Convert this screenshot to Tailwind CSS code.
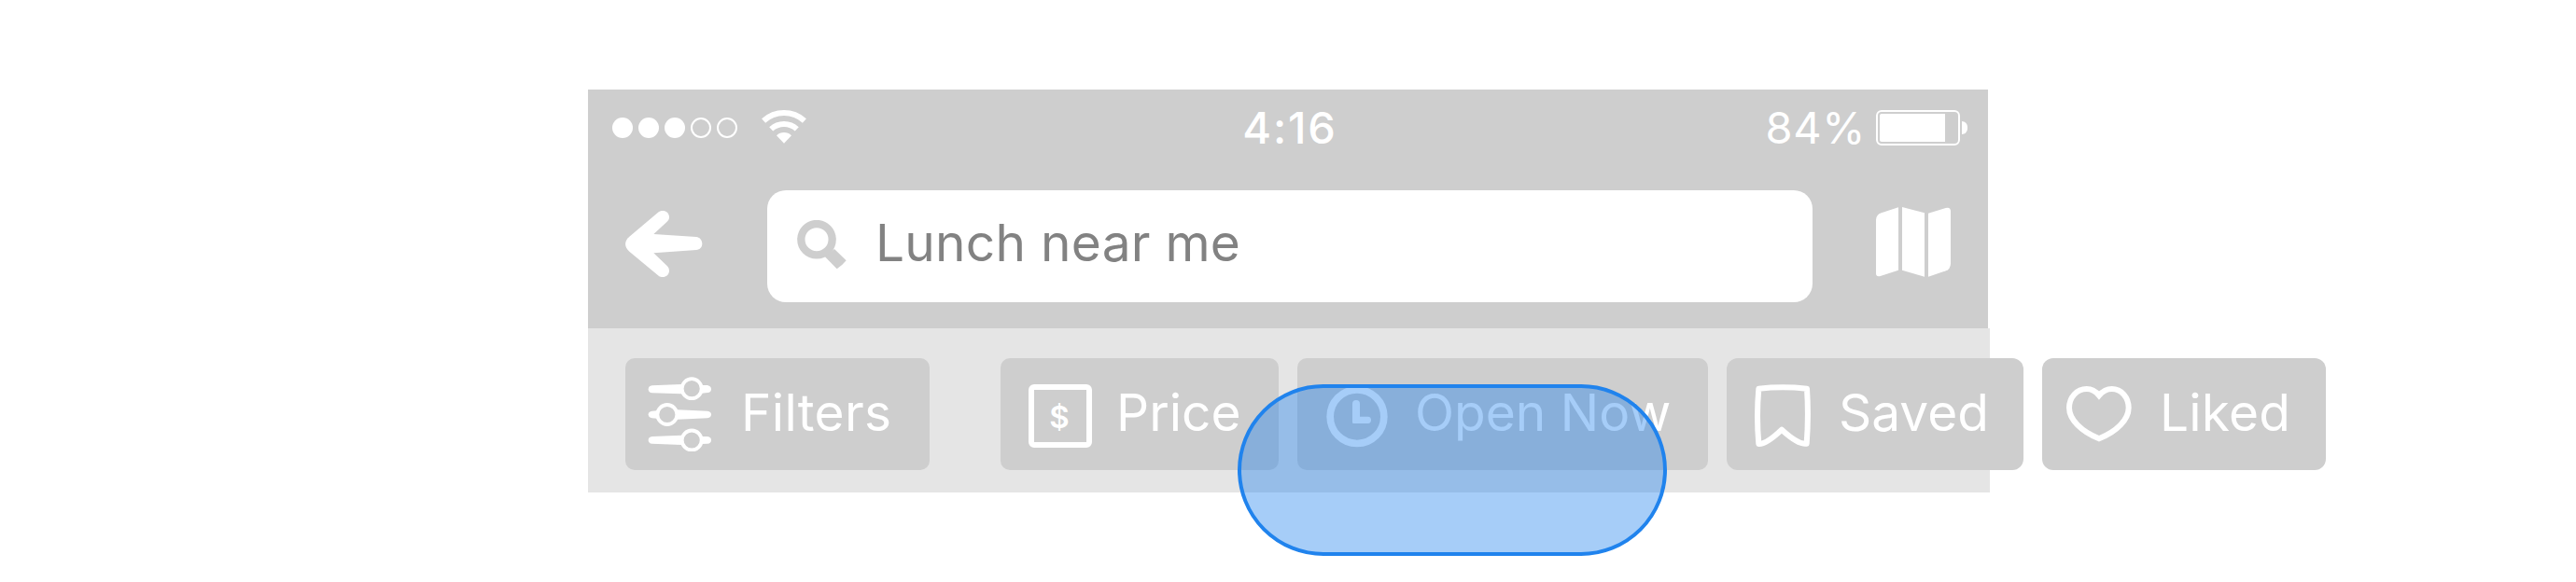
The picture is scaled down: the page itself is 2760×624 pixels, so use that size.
<!DOCTYPE html>
<html lang="en">

<head>
    <meta charset="UTF-8">
    <meta name="viewport" content="width=device-width, initial-scale=1.0">
    <title>Lunch near me</title>
    <script src="https://cdn.jsdelivr.net/npm/@tailwindcss/browser@4"></script>
</head>

<body class="bg-white font-['Inter',sans-serif] h-[624px] overflow-hidden">

    <div class="relative ml-[630px] pt-24 w-[1502px]">

        <!-- Header -->
        <header class="w-[1500px] h-64 bg-[#cecece] text-white">

            <!-- Status bar -->
            <div class="grid grid-cols-[1fr_auto_1fr] items-center h-[82px] pl-[26px] pr-[22px] text-[47px] leading-none">
                <div class="flex items-center gap-[26px]">
                    <div class="flex gap-1.5">
                        <span class="size-[22px] rounded-full bg-white"></span>
                        <span class="size-[22px] rounded-full bg-white"></span>
                        <span class="size-[22px] rounded-full bg-white"></span>
                        <span class="size-[22px] rounded-full border-2 border-white"></span>
                        <span class="size-[22px] rounded-full border-2 border-white"></span>
                    </div>
                    <svg class="w-12 h-[38px]" viewBox="0 0 48 38" fill="none" stroke="#fff" stroke-width="6">
                        <path d="M2.1 11.5A32.5 32.5 0 0 1 45.9 11.5" />
                        <path d="M10.2 20.4A20.5 20.5 0 0 1 37.8 20.4" />
                        <path d="M24 35.8L16 27.2A11.7 11.7 0 0 1 32 27.2Z" fill="#fff" stroke="none" />
                    </svg>
                </div>
                <span class="font-medium tracking-[1.8px] pb-0.5">4:16</span>
                <div class="flex items-center justify-end">
                    <span class="tracking-[0.6px] mr-[11px] pb-0.5">84%</span>
                    <div class="w-[90px] h-[38px] p-0.5 border-2 border-white rounded-md">
                        <div class="w-[70px] h-full bg-white rounded-l-xs"></div>
                    </div>
                    <div class="w-1.5 h-3.5 ml-0.5 bg-white rounded-r-full"></div>
                </div>
            </div>

            <!-- Search row -->
            <div class="flex items-center mt-[26px] h-[120px] pl-10 pr-10">
                <svg class="w-[83px] h-[73px] mb-[5px]" viewBox="150 435 249 219" fill="#fff">
                    <path d="M163 521L257 442C271 432 291 440 291 458C291 464 289 468 284 473L241 513L378 522C390 523 397 533 397 544C397 555 390 563 378 564L241 574L284 615C289 620 291 625 291 631C291 649 271 657 257 647L163 569C146 554 146 536 163 521Z" />
                </svg>
                <div class="flex items-center w-[1120px] h-full ml-[69px] pl-8 bg-white rounded-[20px]">
                    <svg class="w-[53px] h-[53px] mb-1" viewBox="702 467 159 159">
                        <circle cx="765" cy="529" r="50" fill="none" stroke="#cecece" stroke-width="25" />
                        <path d="M822 560L860 597Q848 612 830 624L791 584Z" fill="#cecece" />
                    </svg>
                    <span class="ml-[31px] pb-[7px] text-[55px] leading-none tracking-[0.25px] text-[#828282]">Lunch near me</span>
                </div>
                <svg class="w-20 h-[75px] ml-auto mb-[9px]" viewBox="450 426 240 225" fill="#fff">
                    <path d="M522 427V629L464 648Q450 651 450 640V467Q451 450 467 445Z" />
                    <path d="M534 426L606 445V650L534 629Z" />
                    <path d="M618 446L674 429Q690 425 690 440V608Q689 625 675 631L618 650Z" />
                </svg>
            </div>
        </header>

        <!-- Filter bar, the chips run past its right edge -->
        <div class="flex items-center h-44 pl-10 pt-2 bg-[#e5e5e5] text-white text-[55px] leading-none *:shrink-0">
            <div class="flex items-center w-[326px] h-[120px] pl-6 rounded-[10px] bg-[#cecece]">
                <svg class="w-[69px] h-20" viewBox="222 192 207 240" fill="#fff">
                    <path d="M330 216L236 220Q224 222 224 232Q224 243 236 244L330 247Z" />
                    <path d="M396 219L414 219Q426 222 426 232Q426 243 414 243L396 245Z" />
                    <path d="M318 298L414 302Q426 304 426 313Q426 323 414 325L318 329Z" />
                    <path d="M252 301L236 302Q224 304 224 313Q224 323 236 325L252 326Z" />
                    <path d="M330 380L236 384Q224 386 224 395Q224 406 236 407L330 411Z" />
                    <path d="M396 384L414 384Q426 386 426 395Q426 406 414 407L396 408Z" />
                    <g fill="#cecece" stroke="#fff" stroke-width="11.5">
                        <circle cx="363.5" cy="230" r="31.5" />
                        <circle cx="284.5" cy="313.5" r="31.5" />
                        <circle cx="363.5" cy="396" r="31.5" />
                    </g>
                </svg>
                <span class="ml-[31px] pb-1 tracking-[0.3px]">Filters</span>
            </div>

            <div class="flex items-center w-[298px] h-[120px] ml-[76px] pl-[30px] rounded-[10px] bg-[#cecece]">
                <div class="flex items-center justify-center size-[68px] mt-1 pt-0.5 pr-0.5 border-6 border-white rounded-md text-[33px] font-semibold">$</div>
                <span class="ml-[26px] pb-1">Price</span>
            </div>

            <div class="flex items-center w-[440px] h-[120px] ml-5 pl-[31px] rounded-[10px] bg-[#cecece]">
                <svg class="size-[66px] mt-[5px]" viewBox="123 220 198 198" fill="none" stroke="#fff">
                    <circle cx="222" cy="318" r="86.5" stroke-width="23" />
                    <path d="M207 277Q207 265 219 265Q231 265 231 277V318H257Q267 319 267 329Q267 340 257 340H211Q207 340 207 336Z" fill="#fff" stroke="none" />
                </svg>
                <span class="ml-[29px] pb-1 whitespace-nowrap">Open Now</span>
            </div>

            <div class="flex items-center w-[318px] h-[120px] ml-5 pl-[30px] rounded-[12px] bg-[#cecece]">
                <svg class="w-[60px] h-[68px] mt-[3px]" viewBox="240 215 180 204" fill="none" stroke="#fff" stroke-width="18" stroke-linejoin="round">
                    <path d="M253 229Q330 221 408 229Q414 318 407 406C385 409 350 382 327 361C303 384 272 408 253 407Q245 318 253 229Z" />
                </svg>
                <span class="ml-[30px] pb-1">Saved</span>
            </div>

            <div class="flex items-center w-[304px] h-[120px] ml-5 pl-[25px] rounded-[12px] bg-[#cecece]">
                <svg class="w-[72px] h-[62px]" viewBox="219 219 216 186" fill="none" stroke="#fff" stroke-width="18">
                    <path d="M327 252C314 236 302 231 287 231C255 231 231 258 231 292C231 330 270 368 327 391C384 368 422 330 422 292C422 258 399 231 368 231C352 231 339 238 327 252Z" />
                </svg>
                <span class="ml-[29px] pb-1 tracking-[0.2px]">Liked</span>
            </div>
        </div>

        <!-- Touch area -->
        <div class="absolute left-[696px] top-[412px] w-[460px] h-[184px] rounded-full border-4 border-[#2083ed] bg-[#2083ed]/40"></div>
    </div>

</body>

</html>
